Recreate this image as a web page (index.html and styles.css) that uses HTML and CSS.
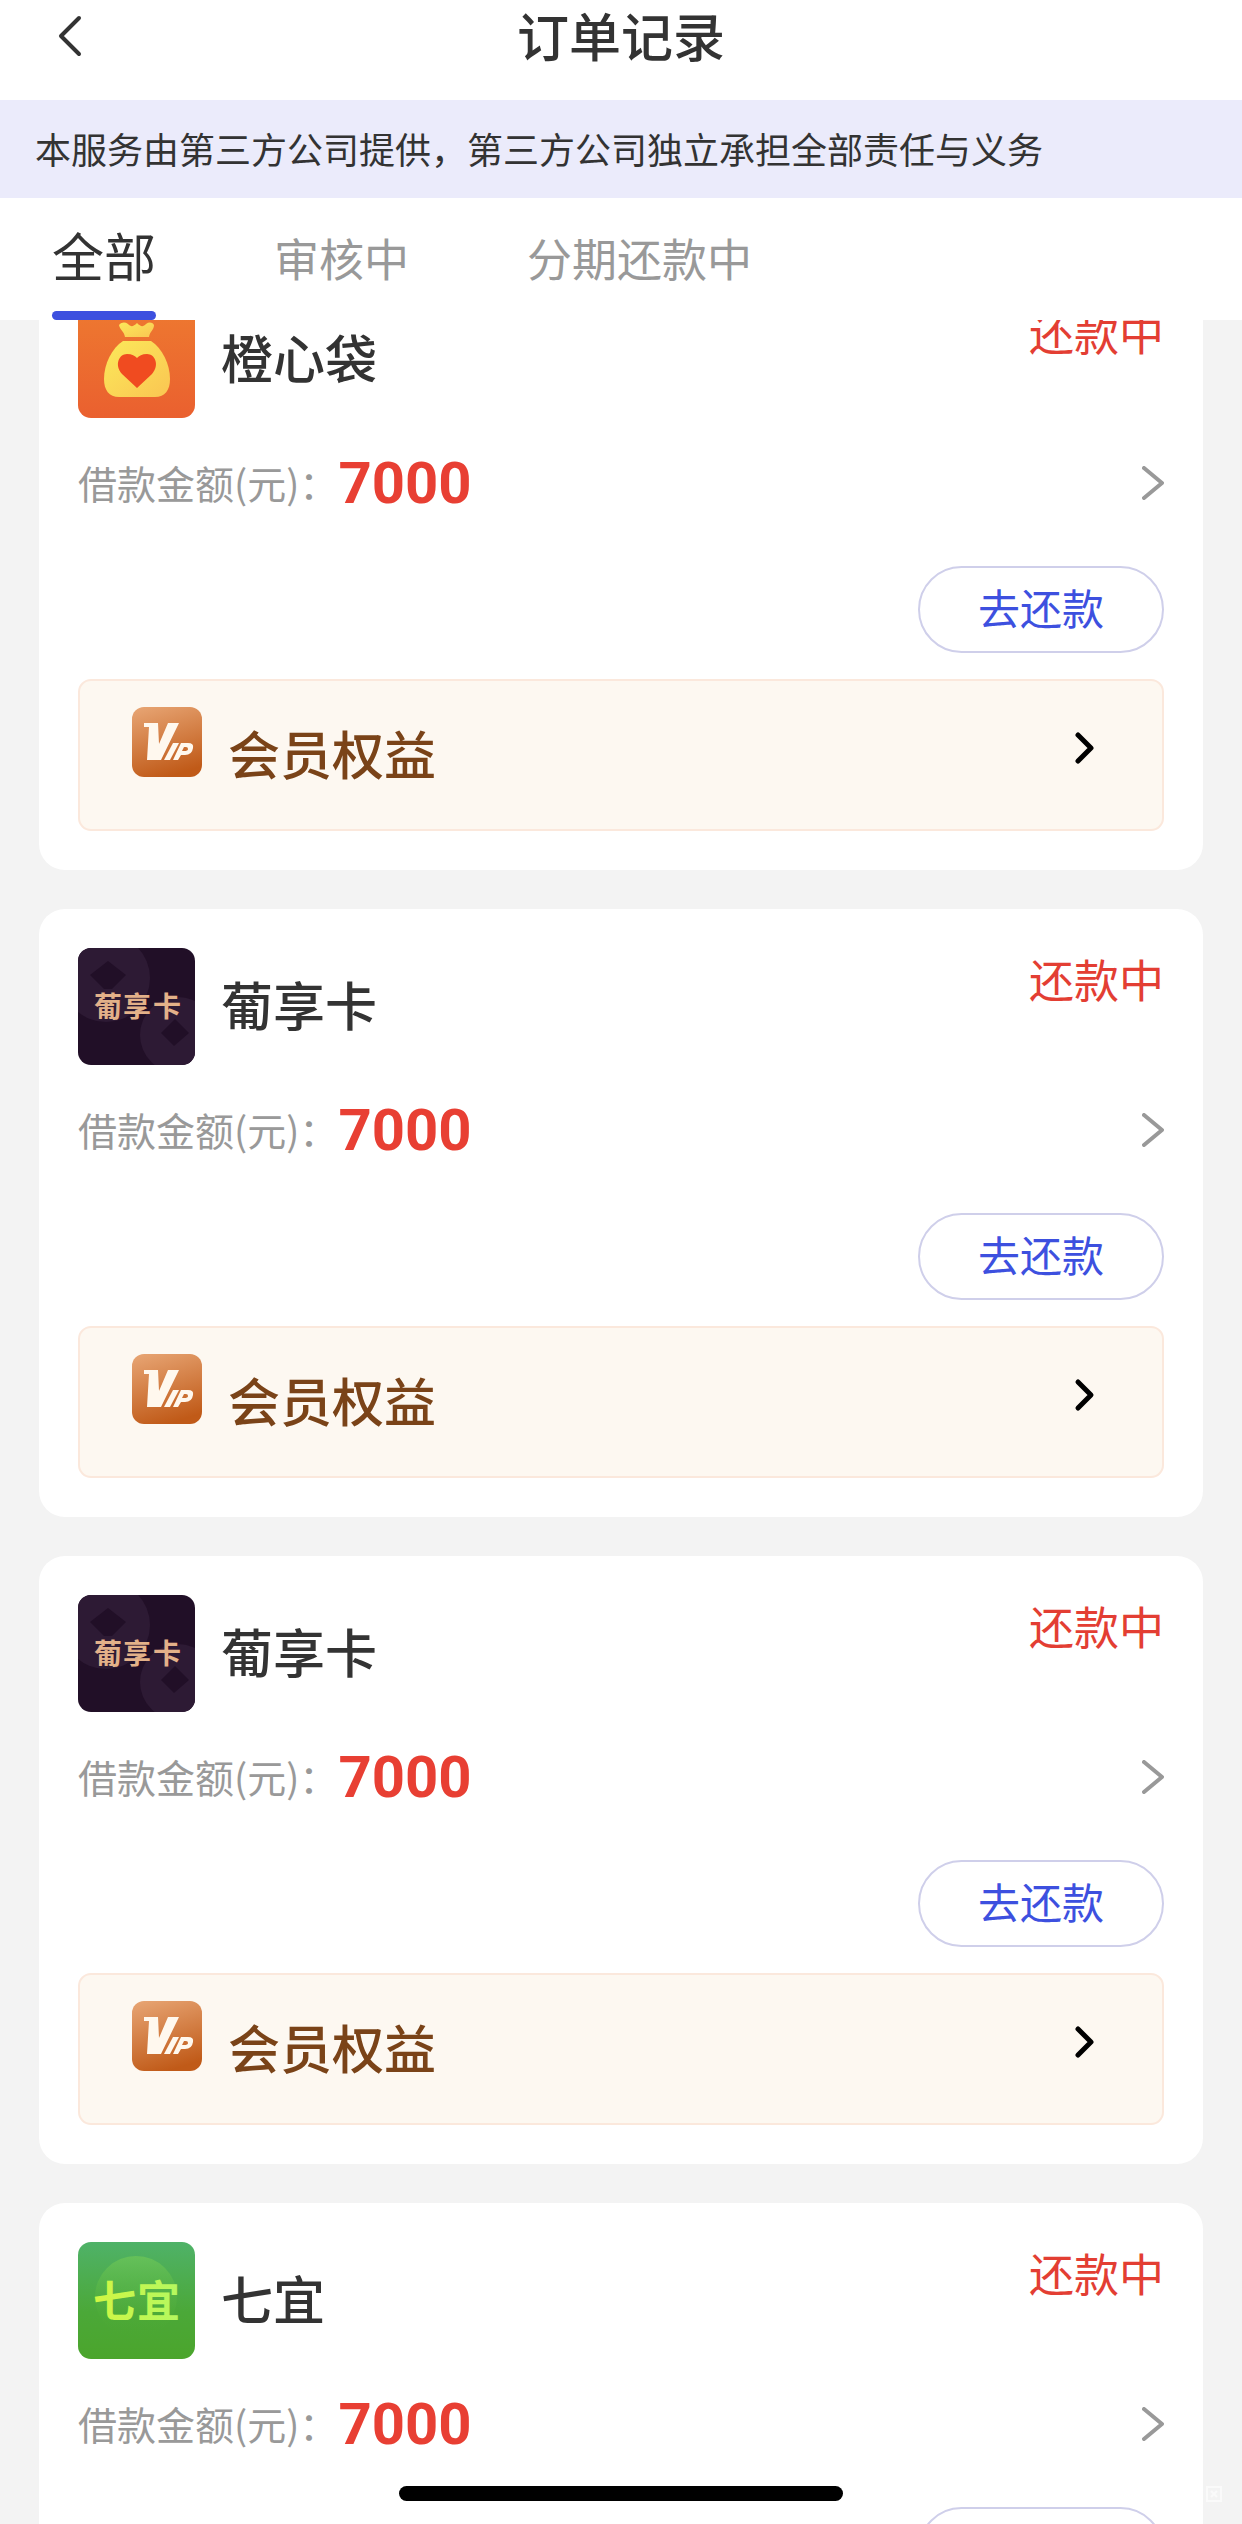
FILE: index.html
```html
<!DOCTYPE html>
<html lang="zh-CN">
<head>
<meta charset="utf-8">
<meta name="viewport" content="width=device-width, initial-scale=1">
<title>订单记录</title>
<link rel="stylesheet" href="styles.css">
</head>
<body>
<svg class="defs" aria-hidden="true">
  <defs>
    <linearGradient id="vip-bg" x1="0.2" y1="0" x2="0.5" y2="1">
      <stop offset="0" stop-color="#e6a270"/>
      <stop offset="1" stop-color="#c05a18"/>
    </linearGradient>
    <linearGradient id="bag-bg" x1="0" y1="0" x2="0" y2="1">
      <stop offset="0" stop-color="#ee7a30"/>
      <stop offset="1" stop-color="#ea602f"/>
    </linearGradient>
    <linearGradient id="bag-fill" x1="0" y1="0" x2="1" y2="1">
      <stop offset="0" stop-color="#fbe95a"/>
      <stop offset="1" stop-color="#fac552"/>
    </linearGradient>
    <linearGradient id="qiyi-bg" x1="0" y1="0" x2="0" y2="1">
      <stop offset="0" stop-color="#4fb268"/>
      <stop offset="0.6" stop-color="#4ba838"/>
      <stop offset="1" stop-color="#4ba52c"/>
    </linearGradient>
    <linearGradient id="qiyi-disc" x1="0" y1="0" x2="0" y2="1">
      <stop offset="0" stop-color="#6bc558" stop-opacity="0.8"/>
      <stop offset="1" stop-color="#4ba830" stop-opacity="0"/>
    </linearGradient>
    <linearGradient id="qiyi-text" x1="0" y1="0" x2="1" y2="0">
      <stop offset="0" stop-color="#d2f642"/>
      <stop offset="1" stop-color="#b4f860"/>
    </linearGradient>
    <symbol id="logo-bag" viewBox="0 0 117 117">
      <rect width="117" height="117" fill="url(#bag-bg)"/>
      <path d="M41 24c3-3 6-3 9-1 3 3 5 3 9-1 4 4 6 4 9 1 3-2 6-2 8 1 0 5-4 6-5 12H47c-1-6-5-7-6-12z" fill="url(#bag-fill)"/>
      <path d="M45 40h28c11 7 19 23 19 38 0 11-5 18-15 18H41c-10 0-15-7-15-18 0-15 8-31 19-38z" fill="url(#bag-fill)"/>
      <path d="M59 87 44 73c-8-9-3-20 5-20 5 0 8 2 10 4 2-2 5-4 10-4 8 0 13 11 5 20z" fill="#f04b20"/>
    </symbol>
    <symbol id="logo-puxiang" viewBox="0 0 117 117">
      <rect width="117" height="117" fill="#210f27"/>
      <circle cx="28" cy="30" r="44" fill="#2d1a34"/>
      <circle cx="100" cy="87" r="38" fill="#2d1a34"/>
      <path d="m30 13 18 14-14 14H26L12 27z" fill="#210f27"/>
      <path d="m97 71 14 14-15 13-13-13z" fill="#210f27"/>
      <text x="16 45 75" y="69" class="logo-text logo-text-gold">葡享卡</text>
    </symbol>
    <symbol id="logo-qiyi" viewBox="0 0 117 117">
      <rect width="117" height="117" fill="url(#qiyi-bg)"/>
      <circle cx="58" cy="55" r="41" fill="url(#qiyi-disc)"/>
      <text x="15 59" y="75" class="logo-text logo-text-lime">七宜</text>
    </symbol>
    <symbol id="icon-vip" viewBox="0 0 70 70">
      <rect width="70" height="70" rx="12" fill="url(#vip-bg)"/>
      <path d="M12 16h14l1 21 9-21h11L29 53H15l2-33h-5z" fill="#fff8ee"/>
      <path d="M41 36h6l-9 17h-6z" fill="#fff8ee"/>
      <path d="M49 36h7q6 0 5 5-1 7-8 7h-4l-3 5h-5zm3 4-2 4h2q4 0 4-2 0-2-2-2z" fill="#fff8ee" fill-rule="evenodd"/>
    </symbol>
  </defs>
</svg>
<div class="app">
  <header class="top">
    <div class="navbar">
      <button class="back" type="button" aria-label="返回">
        <svg width="24" height="42" viewBox="0 0 24 42"><path d="M21 3 3 21l18 18"/></svg>
      </button>
      <h1 class="title">订单记录</h1>
    </div>
    <p class="notice">本服务由第三方公司提供，第三方公司独立承担全部责任与义务</p>
    <nav class="tabs">
      <a class="tab tab-active" href="#all" aria-current="page">全部</a>
      <a class="tab" href="#review">审核中</a>
      <a class="tab" href="#repaying">分期还款中</a>
    </nav>
  </header>
  <main class="orders">
    <div class="order-list">
      <article class="card">
        <div class="card-head">
          <svg class="logo"><use href="#logo-bag"/></svg>
          <h2 class="name">橙心袋</h2>
          <span class="status">还款中</span>
        </div>
        <a class="amount" href="#order-1">
          <span class="label">借款金额(元)：</span><strong class="value">7000</strong>
          <svg class="more" width="22" height="34" viewBox="0 0 22 34"><path d="m2 2 18 15L2 32"/></svg>
        </a>
        <button class="repay" type="button">去还款</button>
        <a class="vip" href="#vip">
          <svg class="vip-icon"><use href="#icon-vip"/></svg>
          <span class="vip-text">会员权益</span>
          <svg class="vip-more" width="22" height="34" viewBox="0 0 22 34"><path d="m4 4 13 13L4 30"/></svg>
        </a>
      </article>
      <article class="card">
        <div class="card-head">
          <svg class="logo"><use href="#logo-puxiang"/></svg>
          <h2 class="name">葡享卡</h2>
          <span class="status">还款中</span>
        </div>
        <a class="amount" href="#order-2">
          <span class="label">借款金额(元)：</span><strong class="value">7000</strong>
          <svg class="more" width="22" height="34" viewBox="0 0 22 34"><path d="m2 2 18 15L2 32"/></svg>
        </a>
        <button class="repay" type="button">去还款</button>
        <a class="vip" href="#vip">
          <svg class="vip-icon"><use href="#icon-vip"/></svg>
          <span class="vip-text">会员权益</span>
          <svg class="vip-more" width="22" height="34" viewBox="0 0 22 34"><path d="m4 4 13 13L4 30"/></svg>
        </a>
      </article>
      <article class="card">
        <div class="card-head">
          <svg class="logo"><use href="#logo-puxiang"/></svg>
          <h2 class="name">葡享卡</h2>
          <span class="status">还款中</span>
        </div>
        <a class="amount" href="#order-3">
          <span class="label">借款金额(元)：</span><strong class="value">7000</strong>
          <svg class="more" width="22" height="34" viewBox="0 0 22 34"><path d="m2 2 18 15L2 32"/></svg>
        </a>
        <button class="repay" type="button">去还款</button>
        <a class="vip" href="#vip">
          <svg class="vip-icon"><use href="#icon-vip"/></svg>
          <span class="vip-text">会员权益</span>
          <svg class="vip-more" width="22" height="34" viewBox="0 0 22 34"><path d="m4 4 13 13L4 30"/></svg>
        </a>
      </article>
      <article class="card">
        <div class="card-head">
          <svg class="logo"><use href="#logo-qiyi"/></svg>
          <h2 class="name">七宜</h2>
          <span class="status">还款中</span>
        </div>
        <a class="amount" href="#order-4">
          <span class="label">借款金额(元)：</span><strong class="value">7000</strong>
          <svg class="more" width="22" height="34" viewBox="0 0 22 34"><path d="m2 2 18 15L2 32"/></svg>
        </a>
        <button class="repay" type="button">去还款</button>
      </article>
    </div>
  </main>
  <div class="home-bar"></div>
  <svg class="corner-mark" width="16" height="16" viewBox="0 0 16 16" aria-hidden="true"><path d="M1 1h14v14H1zM5 5l6 6M11 5l-6 6"/></svg>
</div>
</body>
</html>
```
FILE: styles.css
```css
* {
  box-sizing: border-box;
}

body {
  margin: 0;
  background: #f3f3f3;
  color: #333;
  font-family: "Noto Sans CJK SC", sans-serif;
}

h1,
h2,
p {
  margin: 0;
}

a {
  color: inherit;
  text-decoration: none;
}

button {
  padding: 0;
  background: none;
  border: 0;
  font-family: inherit;
}

.defs {
  position: absolute;
  width: 0;
  height: 0;
}

.app {
  display: flex;
  flex-direction: column;
  height: 100vh;
  overflow: hidden;
}

.top {
  background: #fff;
}

.navbar {
  display: grid;
  grid-template-columns: 104px 1fr 104px;
  align-items: start;
  height: 100px;
}

.back {
  display: flex;
  padding: 15px 22px 0 0;
  justify-self: end;
}

.back path {
  fill: none;
  stroke: #333;
  stroke-width: 4;
  stroke-linecap: round;
  stroke-linejoin: round;
}

.title {
  font-size: 52px;
  line-height: 70px;
  font-weight: 500;
  text-align: center;
}

.notice {
  padding: 21px 35px 23px;
  background: #ebebfb;
  font-size: 36px;
  line-height: 54px;
}

.tabs {
  display: flex;
  gap: 118px;
  height: 122px;
  padding: 0 52px;
}

.tab {
  display: flex;
  align-items: center;
  padding-top: 6px;
  color: #999;
  font-size: 45px;
  border-bottom: 9px solid transparent;
}

.tab-active {
  position: relative;
  padding-top: 0;
  color: #333;
  font-size: 52px;
}

.tab-active::after {
  content: "";
  position: absolute;
  left: 0;
  right: 0;
  bottom: -9px;
  height: 9px;
  border-radius: 5px;
  background: #3d50df;
}

.orders {
  flex: 1;
  min-height: 0;
  overflow-y: auto;
  scrollbar-width: none;
}

/* The list rests partly scrolled under the tabs. */
.order-list {
  display: flex;
  flex-direction: column;
  gap: 39px;
  margin-top: -58px;
  padding: 0 39px 39px;
}

.card {
  display: flex;
  flex-direction: column;
  padding: 39px;
  border-radius: 26px;
  background: #fff;
}

.card-head {
  display: flex;
  align-items: center;
  gap: 26px;
}

.logo {
  width: 117px;
  height: 117px;
  border-radius: 13px;
}

.logo-text {
  font-family: "Noto Sans CJK SC", sans-serif;
  font-weight: 700;
}

.logo-text-gold {
  fill: #e3b189;
  font-size: 28px;
}

.logo-text-lime {
  fill: url(#qiyi-text);
  font-size: 43px;
}

.name {
  flex: 1;
  padding-bottom: 6px;
  font-size: 52px;
  line-height: 76px;
  font-weight: 500;
}

.status {
  align-self: flex-start;
  color: #e33e33;
  font-size: 45px;
  line-height: 62px;
}

.amount {
  display: flex;
  align-items: center;
  height: 60px;
  margin-top: 35px;
}

.label {
  padding-bottom: 3px;
  color: #999;
  font-size: 39px;
}

.value {
  flex: 1;
  color: #e83f33;
  font-family: Roboto, sans-serif;
  font-size: 58px;
  line-height: 60px;
  font-weight: 700;
}

.more path {
  fill: none;
  stroke: #999;
  stroke-width: 4;
  stroke-linecap: round;
  stroke-linejoin: round;
}

.repay {
  align-self: flex-end;
  width: 246px;
  height: 87px;
  margin-top: 53px;
  padding-bottom: 7px;
  border: 2px solid #cfcfea;
  border-radius: 44px;
  color: #3d50df;
  font-size: 42px;
}

.vip {
  display: flex;
  align-items: center;
  height: 152px;
  margin-top: 26px;
  padding: 0 66px 0 52px;
  border: 2px solid #fbe8dc;
  border-radius: 13px;
  background: #fdf8f1;
}

.vip-icon {
  width: 70px;
  height: 70px;
  margin-bottom: 26px;
}

.vip-text {
  flex: 1;
  margin-left: 26px;
  padding-bottom: 6px;
  color: #7a4318;
  font-size: 52px;
  font-weight: 500;
}

.vip-more {
  margin-bottom: 15px;
}

.vip-more path {
  fill: none;
  stroke: #000;
  stroke-width: 5;
  stroke-linecap: round;
  stroke-linejoin: round;
}

.home-bar {
  position: fixed;
  left: 50%;
  bottom: 23px;
  width: 444px;
  height: 15px;
  margin-left: -222px;
  border-radius: 8px;
  background: #000;
}

.corner-mark {
  position: fixed;
  right: 20px;
  bottom: 22px;
}

.corner-mark path {
  fill: none;
  stroke: #fafafa;
  stroke-width: 2;
}
```
